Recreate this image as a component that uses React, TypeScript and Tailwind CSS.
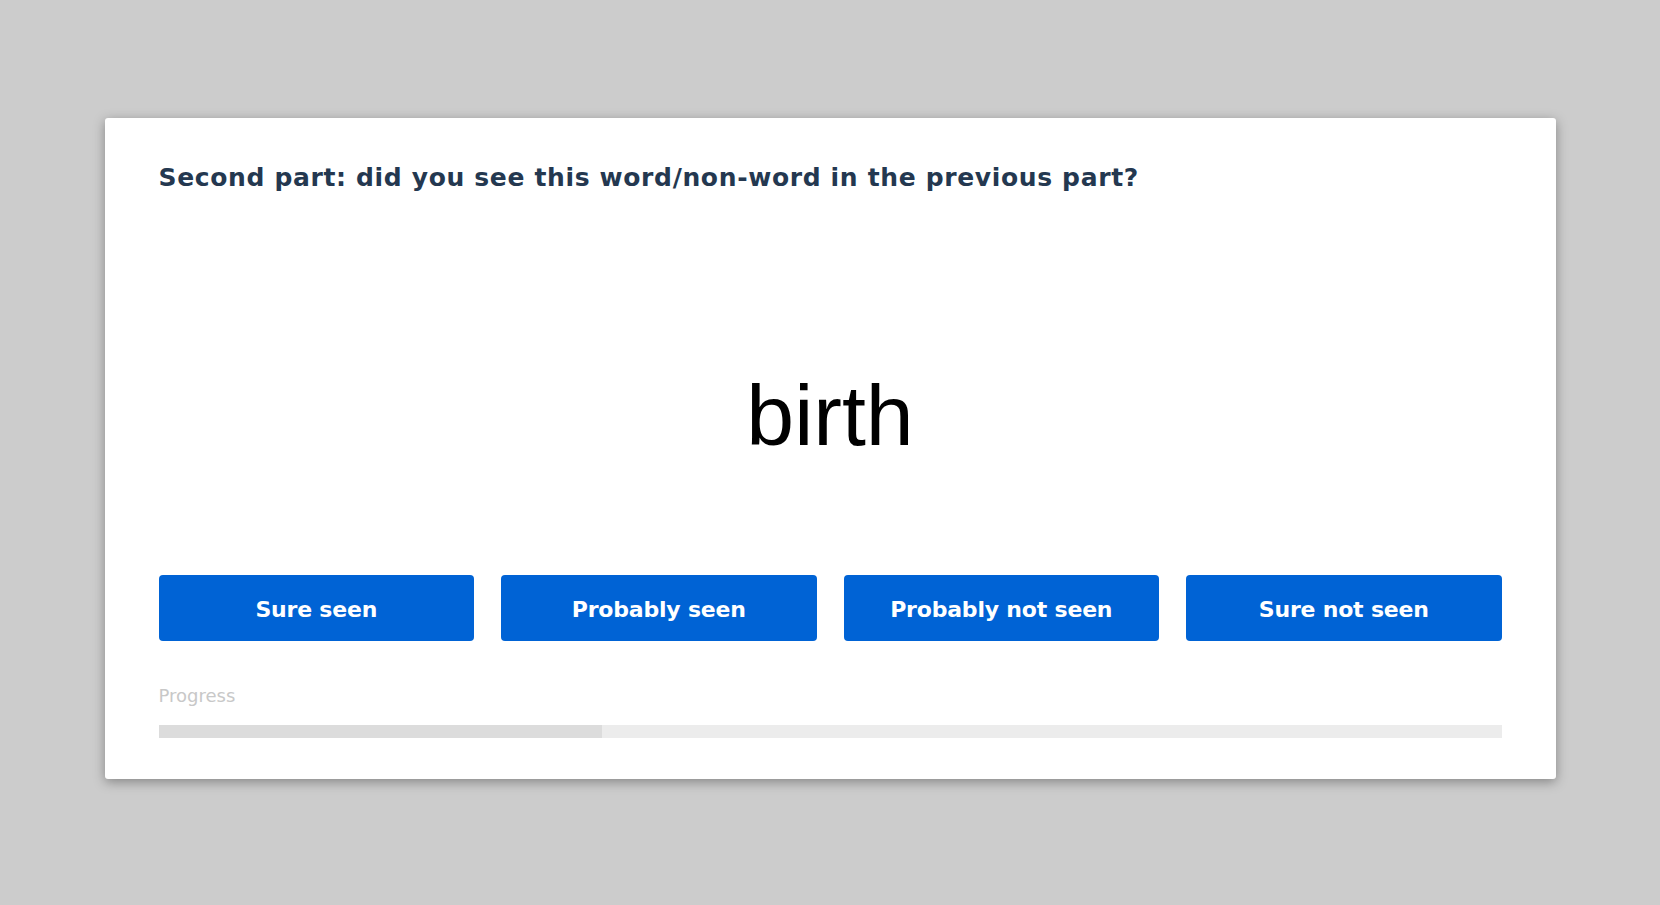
const answers = ["Sure seen", "Probably seen", "Probably not seen", "Sure not seen"];

export default function App() {
  const progress = 0.33;

  return (
    <div className="min-h-[905px] bg-[#cccccc] pt-[118px] font-['DejaVu_Sans',sans-serif]">
      <div className="mx-auto flex w-[1451px] flex-col rounded-[3px] bg-white px-[54px] pt-[45px] pb-[41px] shadow-[0_3px_12px_rgba(0,0,0,0.35)]">
        <h1 className="text-[25px] leading-[29px] font-bold tracking-[0.65px] text-[#243850]">
          Second part: did you see this word/non-word in the previous part?
        </h1>

        <div className="mt-[181px] text-center font-['Liberation_Sans',Arial,sans-serif] text-[86px] leading-[84px] text-black">
          birth
        </div>

        <div className="mt-[118px] grid grid-cols-4 gap-[27px]">
          {answers.map((label) => (
            <button
              key={label}
              className="h-[66px] rounded-[4px] bg-[#0063d5] pt-[2px] text-[22px] font-bold tracking-[-0.2px] text-white"
            >
              {label}
            </button>
          ))}
        </div>

        <div className="mt-[44px] text-[18px] leading-[22px] text-[#c8c8c8]">Progress</div>
        <div className="mt-[18px] h-[13px] w-full bg-[#ececec]">
          <div className="h-full bg-[#dcdcdc]" style={{ width: `${progress * 100}%` }} />
        </div>
      </div>
    </div>
  );
}
